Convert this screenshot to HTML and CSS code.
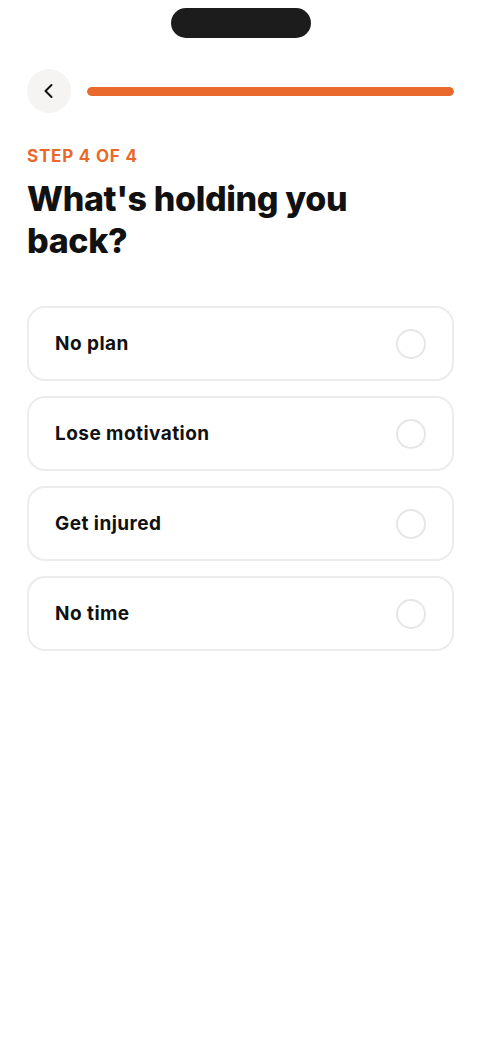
FILE: index.html
```html
<!DOCTYPE html>
<html lang="en">
<head>
<meta charset="utf-8">
<title>Step 4</title>
<link rel="stylesheet" href="styles.css">
</head>
<body>
<div class="screen">
  <div class="status"><div class="island"></div></div>
  <div class="topbar">
    <button class="back" aria-label="Back">
      <svg width="20" height="20" viewBox="0 0 20 20"><path d="M12.5 4 L6.5 10 L12.5 16" fill="none" stroke="#111" stroke-width="2" stroke-linecap="round" stroke-linejoin="round"/></svg>
    </button>
    <div class="progress"><div class="fill"></div></div>
  </div>
  <div class="step">STEP 4 OF 4</div>
  <h1 class="title">What's holding you back?</h1>
  <div class="options">
    <div class="option"><span class="label">No plan</span><span class="radio"></span></div>
    <div class="option"><span class="label">Lose motivation</span><span class="radio"></span></div>
    <div class="option"><span class="label">Get injured</span><span class="radio"></span></div>
    <div class="option"><span class="label">No time</span><span class="radio"></span></div>
  </div>
</div>
</body>
</html>
```
FILE: styles.css
```css
* { box-sizing: border-box; }
html, body { margin: 0; padding: 0; background: #fff; }
body { font-family: Inter, "Noto Sans", sans-serif; color: #111; }
.screen { width: 480px; min-height: 1052px; padding: 0 26px 0 27px; }
.status { height: 46px; padding-top: 8px; display: flex; justify-content: center; }
.island { width: 140px; height: 30px; border-radius: 15px; background: #1c1c1c; }
.topbar { display: flex; align-items: center; gap: 16px; margin-top: 23px; }
.back { width: 44px; height: 44px; border-radius: 50%; border: none; background: #f5f4f2; display: flex; align-items: center; justify-content: center; padding: 0; flex: none; }
.progress { flex: 1; height: 9px; border-radius: 5px; background: #eee; overflow: hidden; }
.fill { width: 100%; height: 100%; background: #e8692b; border-radius: 5px; }
.step { margin-top: 33px; font-size: 17px; font-weight: 700; color: #e8692b; letter-spacing: 0.8px; line-height: 20px; }
.title { margin: 12px 0 0; font-size: 34px; font-weight: 800; line-height: 42px; letter-spacing: -0.35px; width: 340px; }
.options { margin-top: 44px; display: flex; flex-direction: column; gap: 15px; }
.option { height: 75px; border: 2px solid #ececec; border-radius: 18px; display: flex; align-items: center; justify-content: space-between; padding: 0 26px 0 26px; }
.label { font-size: 19px; font-weight: 700; letter-spacing: 0.45px; }
.radio { width: 30px; height: 30px; border-radius: 50%; border: 2px solid #e6e6e6; }
```
